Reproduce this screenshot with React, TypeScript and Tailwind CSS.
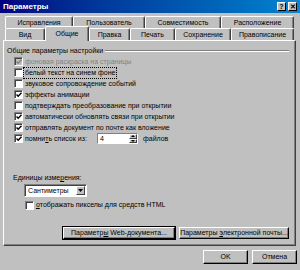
import React from "react";

const ROWS = [
  { label: "фоновая раскраска на страницы", checked: true, disabled: true },
  { label: "белый текст на синем фоне", focus: true },
  { label: "звуковое сопровождение событий" },
  { label: "эффекты анимации", checked: true },
  { label: "подтверждать преобразование при открытии" },
  { label: "автоматически обновлять связи при открытии", checked: true },
  { label: "отправлять документ по почте как вложение", checked: true },
];

const BACK_TABS = [
  { label: "Исправления", w: "w-[68px]" },
  { label: "Пользователь", w: "w-[72px]" },
  { label: "Совместимость", w: "w-[76px]" },
  { label: "Расположение", w: "w-[73px]" },
];

const FRONT_TABS = [
  { label: "Вид", w: "w-[40px]" },
  { label: "Общие", w: "w-[44px]", active: true },
  { label: "Правка", w: "w-[41px]" },
  { label: "Печать", w: "w-[45px]" },
  { label: "Сохранение", w: "w-[56px]" },
  { label: "Правописание", w: "w-[63px]" },
];

function CheckBox({ checked, disabled }: { checked?: boolean; disabled?: boolean }) {
  return (
    <span
      className={
        "relative block w-[9px] h-[9px] shrink-0 border border-t-[#808080] border-l-[#808080] border-b-white border-r-white shadow-[inset_1px_1px_0_#404040] " +
        (disabled ? "bg-[#c0c0c0]" : "bg-white")
      }
    >
      {checked && (
        <svg className="absolute left-[1px] top-[1px]" width="6" height="6" viewBox="0 0 6 6">
          <path
            d="M0.5 2.5 L2.2 4.3 L5.5 0.8"
            fill="none"
            stroke={disabled ? "#808080" : "#000"}
            strokeWidth="1.4"
          />
        </svg>
      )}
    </span>
  );
}

function Button({ children, w }: { children: React.ReactNode; w: string }) {
  return (
    <div
      className={
        w +
        " flex items-center justify-center bg-[#c0c0c0] border border-t-white border-l-white border-r-black border-b-black shadow-[inset_-1px_-1px_0_#808080] whitespace-pre"
      }
    >
      {children}
    </div>
  );
}

export default function App() {
  return (
    <div className="w-[300px] h-[270px] bg-[#c0c0c0] overflow-hidden text-[7px] leading-[10px] text-black font-['Liberation_Sans',Arial,sans-serif]">
      {/* Title bar */}
      <div className="h-[13px] flex items-center justify-between pl-[3px] pr-[3px] bg-gradient-to-r from-[#000080] to-[#1084d0]">
        <span className="text-white font-bold text-[8px]">Параметры</span>
        <div className="flex gap-[2px]">
          <div className="w-[9px] h-[9px] flex items-center justify-center bg-[#c0c0c0] border border-t-white border-l-white border-r-black border-b-black text-[7px] font-bold leading-none">
            ?
          </div>
          <div className="w-[9px] h-[9px] flex items-center justify-center bg-[#c0c0c0] border border-t-white border-l-white border-r-black border-b-black text-[7px] font-bold leading-none">
            ✕
          </div>
        </div>
      </div>

      {/* Tabs */}
      <div className="mt-[3px] pl-[5px]">
        <div className="flex h-[12px]">
          {BACK_TABS.map((t) => (
            <div
              key={t.label}
              className={
                t.w +
                " flex items-center justify-center border-t border-l border-r border-t-white border-l-white border-r-[#404040] rounded-t-[2px] shadow-[inset_-1px_0_0_#808080]"
              }
            >
              {t.label}
            </div>
          ))}
        </div>
        <div className="flex h-[12px]">
          {FRONT_TABS.map((t) =>
            t.active ? (
              <div
                key={t.label}
                className={
                  t.w +
                  " relative z-10 -mt-[2px] h-[15px] flex items-center justify-center bg-[#c0c0c0] border-t border-l border-r border-t-white border-l-white border-r-[#404040] rounded-t-[2px] shadow-[inset_-1px_0_0_#808080]"
                }
              >
                {t.label}
              </div>
            ) : (
              <div
                key={t.label}
                className={
                  t.w +
                  " flex items-center justify-center border-t border-l border-r border-t-white border-l-white border-r-[#404040] rounded-t-[2px] shadow-[inset_-1px_0_0_#808080]"
                }
              >
                {t.label}
              </div>
            )
          )}
        </div>
      </div>

      {/* Panel */}
      <div className="ml-[3px] w-[293px] h-[206px] border border-t-white border-l-white border-r-[#404040] border-b-[#404040] shadow-[inset_-1px_-1px_0_#808080] flex flex-col">
        <div className="mt-[5px] pl-[3px] pr-[6px] flex items-center h-[10px]">
          <span className="whitespace-nowrap">Общие параметры настройки</span>
          <div className="flex-1 ml-[2px] h-[2px] border-t border-t-[#808080] border-b border-b-white" />
        </div>

        <div className="pl-[10px] flex flex-col">
          {ROWS.map((r) => (
            <div key={r.label} className="flex items-center h-[11px] gap-[1px]">
              <CheckBox checked={r.checked} disabled={r.disabled} />
              <span
                className={
                  "whitespace-nowrap px-[1px] " +
                  (r.disabled ? "text-[#808080] " : "") +
                  (r.focus ? "outline outline-1 outline-dotted outline-black" : "")
                }
              >
                {r.label}
              </span>
            </div>
          ))}
          <div className="flex items-center h-[11px] gap-[1px]">
            <CheckBox checked />
            <span className="whitespace-nowrap px-[1px] w-[72px]">
              помни<u>т</u>ь список из:
            </span>
            <div className="flex h-[11px] w-[41px] bg-white border border-t-[#808080] border-l-[#808080] border-b-white border-r-white">
              <span className="flex-1 pl-[2px] leading-[9px]">4</span>
              <div className="w-[8px] flex flex-col">
                <div className="flex-1 flex items-center justify-center bg-[#c0c0c0] border border-t-white border-l-white border-r-[#404040] border-b-[#404040]">
                  <svg width="4" height="2" viewBox="0 0 4 2"><path d="M0 2 L2 0 L4 2 Z" fill="#000" /></svg>
                </div>
                <div className="flex-1 flex items-center justify-center bg-[#c0c0c0] border border-t-white border-l-white border-r-[#404040] border-b-[#404040]">
                  <svg width="4" height="2" viewBox="0 0 4 2"><path d="M0 0 L2 2 L4 0 Z" fill="#000" /></svg>
                </div>
              </div>
            </div>
            <span className="ml-[4px] whitespace-nowrap">файлов</span>
          </div>
        </div>

        <div className="mt-[29px] pl-[9px] h-[10px] flex items-center">
          Единицы изме<u>р</u>ения:
        </div>
        <div className="mt-[1px] ml-[20px] w-[63px] h-[13px] flex bg-white border border-t-[#808080] border-l-[#808080] border-b-white border-r-white shadow-[inset_1px_1px_0_#404040]">
          <span className="flex-1 pl-[3px] flex items-center">Сантиметры</span>
          <div className="w-[9px] my-[1px] mr-[1px] flex items-center justify-center bg-[#c0c0c0] border border-t-white border-l-white border-r-[#404040] border-b-[#404040]">
            <svg width="5" height="3" viewBox="0 0 5 3"><path d="M0 0 L2.5 3 L5 0 Z" fill="#000" /></svg>
          </div>
        </div>
        <div className="mt-[3px] pl-[21px] flex items-center h-[10px] gap-[1px]">
          <CheckBox />
          <span className="whitespace-nowrap px-[1px]">
            <u>о</u>тображать пикселы для средств HTML
          </span>
        </div>

        <div className="mt-[17px] pl-[59px] flex gap-[4px] h-[12px]">
          <Button w="w-[112px] outline outline-1 outline-black">
            {"Параметр"}<u>ы</u>{" Web-документа..."}
          </Button>
          <Button w="w-[110px]">
            {"Параметры "}<u>э</u>{"лектронной почты..."}
          </Button>
        </div>
      </div>

      {/* Dialog buttons */}
      <div className="mt-[4px] pr-[3px] flex justify-end gap-[4px] h-[14px]">
        <Button w="w-[45px]">OK</Button>
        <Button w="w-[45px]">Отмена</Button>
      </div>
    </div>
  );
}
